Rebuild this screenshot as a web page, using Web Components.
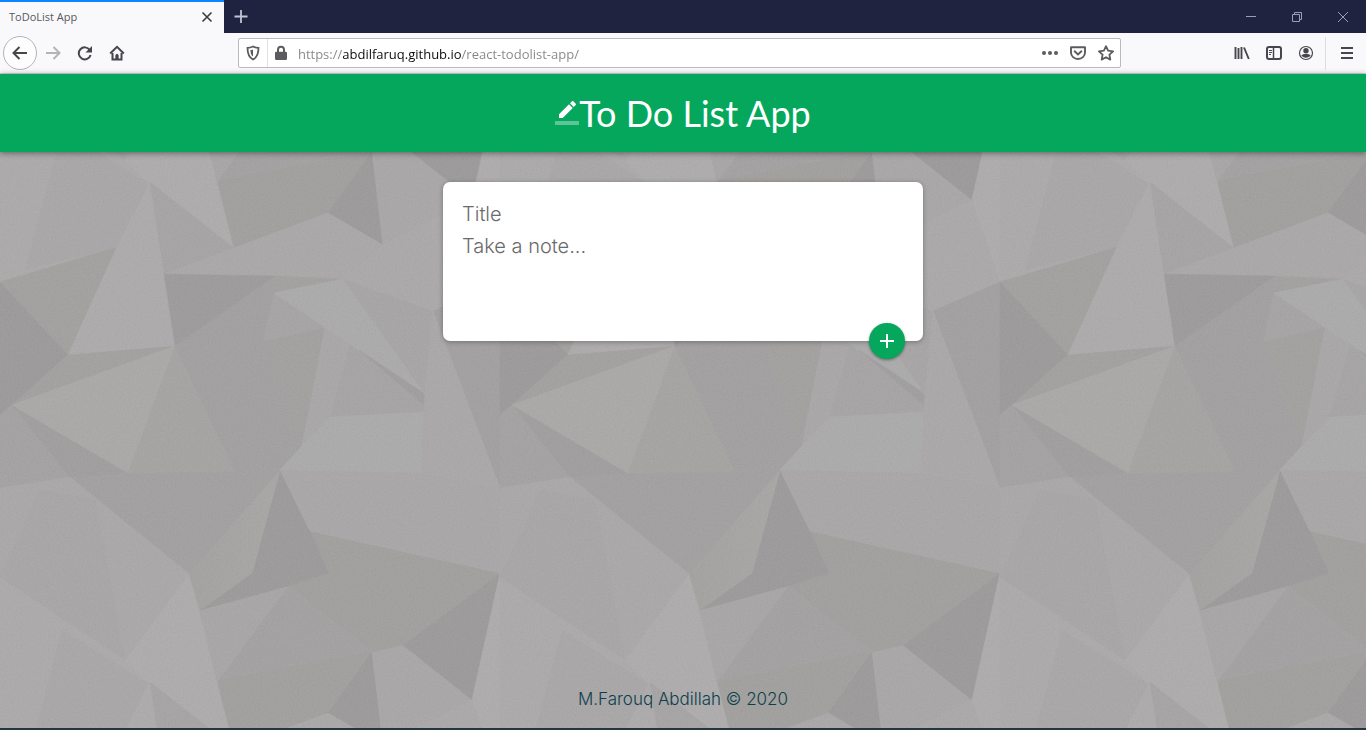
<!DOCTYPE html>
<html lang="en">
<head>
<meta charset="utf-8">
<title>ToDoList App</title>
<style>
  html, body { margin: 0; }
  body { min-height: 100vh; display: flex; flex-direction: column; font-family: "Open Sans", sans-serif; background: #263640; }
</style>
</head>
<body>
<browser-tabs>ToDoList App</browser-tabs>
<browser-toolbar></browser-toolbar>
<todo-app>
  <todo-header>To Do List App</todo-header>
  <note-form></note-form>
  <todo-footer>M.Farouq Abdillah © 2020</todo-footer>
</todo-app>

<script>
const define = (name, html) => customElements.define(name, class extends HTMLElement {
  constructor() {
    super();
    const t = document.createElement('template');
    t.innerHTML = html;
    this.attachShadow({ mode: 'open' }).append(t.content.cloneNode(true));
  }
});

const GLYPHS = {
  close: '<path d="M3.5 3.5l9 9m0-9l-9 9" stroke-width="1.6"/>',
  plus: '<path d="M8 1v13M1.5 7.500h13" stroke-width="1.8"/>',
  minimise: '<path d="M3 7.5h10" stroke-width="1"/>',
  restore: '<path d="M3.5 5.500h7v7h-7zM5.500 5.500v-2h7v7h-2" stroke-width="1"/>',
  shut: '<path d="M3 3l10 10M13 3L3 13" stroke-width="1"/>',
  back: '<path d="M15 8H1.800M7.500 2L1.500 8l6 6" stroke-width="2"/>',
  forward: '<path d="M1 8h13.200M8.500 2l6 6-6 6" stroke-width="2"/>',
  reload: '<path d="M12.800 5A6 6 0 1 0 13.600 10" stroke-width="2"/><path d="M15 1v6.500H8.500z" fill="currentColor" stroke="none"/>',
  home: '<path d="M1.200 8.500L8 1.800l6.800 6.700" stroke-width="2"/><path d="M3.500 8v6.500h9V8" stroke-width="2"/><path d="M6.800 14.500V10.500a1.200 1.200 0 0 1 2.400 0v4z" fill="currentColor" stroke-width=".8"/>',
  shield: '<path d="M8 1.500c2 1 3.800 1.300 5.500 1.300 0 5.700-1 9.500-5.500 11.700C3.500 12.300 2.500 8.500 2.500 2.800 4.200 2.800 6 2.500 8 1.500z" stroke-width="1.800"/><path d="M8 4.500c-1 .4-1.800.6-2.600.7.100 2.800.8 5 2.600 6.300z" fill="currentColor" stroke="none"/>',
  lock: '<path d="M5 7V4.800a3 3 0 0 1 6 0V7" stroke-width="2"/><rect x="2" y="6.800" width="12" height="8.200" rx="1.200" fill="currentColor" stroke="none"/>',
  dots: '<g fill="currentColor" stroke="none"><circle cx="2" cy="8" r="2"/><circle cx="8" cy="8" r="2"/><circle cx="14" cy="8" r="2"/></g>',
  pocket: '<path d="M1 2.200h14V7.500a7 6.500 0 0 1-14 0z" stroke-width="1.900" stroke-linejoin="round"/><path d="M4.600 6.300L8 9.500l3.400-3.200" stroke-width="1.900" stroke-linecap="round"/>',
  star: '<path d="M8 1.200l2.100 4.500 5 .6-3.700 3.400.9 4.900L8 12.200l-4.300 2.400.9-4.900L.900 6.300l5-.6z" stroke-width="1.800" stroke-linejoin="round"/>',
  library: '<path d="M1.500 2v12M4.500 3v11M7.500 2v12M10 2.500l4.800 11.500" stroke-width="1.900"/>',
  sidebar: '<rect x="1" y="2" width="14" height="12" rx="2" stroke-width="2"/><path d="M7.500 2v12" stroke-width="1.500"/><path d="M3 5.500h3M3 7.500h3M3 9.500h2" stroke-width="1"/>',
  account: '<circle cx="8" cy="8" r="6.500" stroke-width="1.200"/><circle cx="8" cy="5.800" r="2.700" fill="currentColor" stroke="none"/><path d="M3.300 10.300c2-1.700 7.400-1.700 9.400 0-1.800 3.300-7.600 3.300-9.400 0z" fill="currentColor" stroke="none"/>',
  menu: '<path d="M2 3h12M2 8h12M2 13h12" stroke-width="2"/>',
};

customElements.define('ui-icon', class extends HTMLElement {
  connectedCallback() {
    if (this.shadowRoot) return;
    this.attachShadow({ mode: 'open' }).innerHTML =
      `<style>:host{display:block;width:16px;height:16px;flex:none}svg{display:block}</style>
       <svg width="16" height="16" viewBox="0 0 16 16" fill="none" stroke="currentColor" aria-hidden="true">${GLYPHS[this.getAttribute('name')]}</svg>`;
  }
});

const BUTTON = `button{border:0;margin:0;padding:0;background:none;color:inherit;font:inherit;display:grid;place-items:center;flex:none}`;

define('browser-tabs', `
<style>
  ${BUTTON}
  :host { display: flex; height: 33px; background: #202340; color: #c4c4d6; flex: none; }
  .tab { box-sizing: border-box; width: 224px; border-top: 2px solid #0a84ff; background: #f9f9fb; color: #58585c;
         display: flex; align-items: center; justify-content: space-between; padding: 0 9px 2px; font-size: 11px; }
  .tab button { color: #3c3c40; }
  .new { width: 34px; }
  .window { display: flex; margin-left: auto; color: #9c9cb4; }
  .window button { width: 46px; }
</style>
<div class="tab"><slot></slot><button aria-label="Close tab"><ui-icon name="close"></ui-icon></button></div>
<button class="new" aria-label="New tab"><ui-icon name="plus"></ui-icon></button>
<div class="window">
  <button aria-label="Minimise"><ui-icon name="minimise"></ui-icon></button>
  <button aria-label="Restore"><ui-icon name="restore"></ui-icon></button>
  <button aria-label="Close"><ui-icon name="shut"></ui-icon></button>
</div>`);

define('browser-toolbar', `
<style>
  ${BUTTON}
  :host { display: flex; align-items: center; box-sizing: border-box; height: 41px; padding: 0 3px; background: #f9f9fb;
          border-bottom: 1px solid #d8d4da; color: #47474b; flex: none; }
  button { width: 32px; height: 32px; }
  .back { width: 34px; height: 34px; border: 1px solid #b4b4b8; border-radius: 50%; background: #fdfdfe; }
  .forward { color: #b4b4b7; }
  .gap { flex: 5 1 0; }
  .address { flex: 42 1 0; min-width: 0; box-sizing: border-box; height: 30px; display: flex; align-items: center;
             border: 1px solid #b9b9be; border-radius: 2px; background: #fff; color: #5c5c60; }
  .address button { width: 28px; height: 28px; }
  .lock { border-left: 1px solid #e2e2e4; }
  input { flex: 1; min-width: 0; border: 0; outline: 0; margin: 0; padding: 1px 0 0 3px; font: 13px "Open Sans", sans-serif; height: 24px;
          background: linear-gradient(90deg, #858589 48px, #0c0c0d 48px, #0c0c0d 166px, #858589 166px);
          -webkit-background-clip: text; background-clip: text; color: transparent; }
  .rule { width: 1px; height: 33px; background: #dedee2; margin: 0 5px 0 3px; }
</style>
<button class="back" aria-label="Back"><ui-icon name="back"></ui-icon></button>
<button class="forward" aria-label="Forward"><ui-icon name="forward"></ui-icon></button>
<button aria-label="Reload"><ui-icon name="reload"></ui-icon></button>
<button aria-label="Home"><ui-icon name="home"></ui-icon></button>
<div class="gap"></div>
<div class="address">
  <button aria-label="Tracking protection"><ui-icon name="shield"></ui-icon></button>
  <button class="lock" aria-label="Site information"><ui-icon name="lock"></ui-icon></button>
  <input aria-label="Address" value="https://abdilfaruq.github.io/react-todolist-app/" spellcheck="false">
  <button aria-label="Page actions"><ui-icon name="dots"></ui-icon></button>
  <button aria-label="Save to Pocket"><ui-icon name="pocket"></ui-icon></button>
  <button aria-label="Bookmark"><ui-icon name="star"></ui-icon></button>
</div>
<div class="gap"></div>
<button aria-label="Library"><ui-icon name="library"></ui-icon></button>
<button aria-label="Sidebars"><ui-icon name="sidebar"></ui-icon></button>
<button aria-label="Account"><ui-icon name="account"></ui-icon></button>
<div class="rule"></div>
<button aria-label="Menu"><ui-icon name="menu"></ui-icon></button>`);

/* Facets of the repeating 500 x 500 low-poly wallpaper: fill, then points. */
const FACETS = [
  ['#aba9aa', '0,577 125,660 149,684 164,774 117,747 0,782'],
  ['#a8a6a7', '62,630 149,684 164,774 117,747 25,770'],
  ['#a1a09e', '0,282 117,247 68,355'],
  ['#9b999a', '0,282 68,355 12,405 0,415'],
  ['#a19f9f', '433,311 500,282 500,415 512,405 500,488'],
  ['#acaaab', '117,247 150,182 164,274 175,346 68,355'],
  ['#a5a3a4', '150,182 234,248 275,276 164,274'],
  ['#a9a7a8', '234,248 328,213 383,245 343,279 275,276 164,274'],
  ['#adabac', '189,574 125,660 149,684 234,748'],
  ['#a09f9d', '217,680 372,650 328,713 234,748'],
  ['#9b999a', '372,651 328,713 383,745'],
  ['#a8a6a7', '372,651 403,645 472,700 383,745'],
  ['#9b999a', '403,645 500,573 472,700'],
  ['#adabac', '500,573 472,700 500,782 540,730 560,617'],
  ['#aaa8a9', '472,700 383,745 343,779 433,811 500,782'],
  ['#a09f9d', '310,531 500,573 403,645 372,652 288,586 329,573'],
  ['#a3a0a1', '288,586 372,651 217,680'],
  ['#a7a5a6', '200,610 288,586 217,682'],
  ['#9b999a', '280,470 310,531 329,573 288,586 200,610 252,573'],
  ['url(#olive)', '280,470 252,573 200,610 189,574'],
  ['#a29fa0', '128,473 280,470 189,574 70,477'],
  ['#a3a1a1', '12,405 128,473 70,477 0,488 0,415'],
  ['#9f9d9e', '12,405 128,473 70,477'],
  ['#a9a7a8', '0,488 70,477 189,574 125,660 0,577'],
  ['#a7a5a6', '40,490 95,500 125,660 0,577'],
  ['#a29f9f', '68,355 175,346 12,405'],
  ['#a9a8a7', '12,405 175,346 128,473'],
  ['#a4a3a1', '175,346 235,471 128,473'],
  ['#a19f9f', '175,346 275,276 274,293 325,328 302,446 280,470 235,471'],
  ['#9c9a9b', '164,274 275,276 175,346'],
  ['#a2a09f', '275,276 343,279 274,293'],
  ['#a5a3a4', '274,293 325,328 263,342'],
  ['#a29f9f', '325,328 302,446 263,342'],
  ['#a8a6a7', '325,328 322,320 425,390 425,412 330,418 302,446'],
  ['#a5a3a4', '350,345 425,398 425,412 330,418'],
  ['#abaaaa', '330,417 425,412 421,473 280,470 302,446'],
  ['#abaaaa', '274,293 343,279 425,394'],
  ['#a6a4a5', '343,279 433,311 425,394'],
  ['#9f9d9e', '359,350 425,394 425,406'],
  ['#a9a7a8', '433,311 500,488 421,473 425,390'],
  ['#a8a6a7', '280,470 421,473 500,488 500,573 310,531'],
];
const facets = FACETS.map(([f, p]) => `<polygon fill="${f}" stroke="${f}" stroke-width=".5" points="${p}"/>`).join('');
const copies = [-500, 0, 500].flatMap(x => [-1000, -500, 0].map(y => `<use href="#facets" x="${x}" y="${y}"/>`)).join('');

define('todo-app', `
<style>
  :host { display: flex; flex-direction: column; flex: 1; position: relative; isolation: isolate; background: #a7a5a6; margin-bottom: 2px; }
  .wallpaper { position: absolute; inset: 0; width: 100%; height: 100%; z-index: -1; }
</style>
<svg class="wallpaper" aria-hidden="true">
  <defs>
    <linearGradient id="olive" x1="0" y1="0" x2="1" y2="0"><stop offset="0" stop-color="#a3a1a0"/><stop offset="1" stop-color="#a8a6a5"/></linearGradient>
    <g id="facets">${facets}</g>
    <pattern id="tile" width="500" height="500" patternUnits="userSpaceOnUse" patternTransform="translate(0 -74)">
      <rect width="500" height="500" fill="#a9a7a8"/>${copies}
    </pattern>
    <filter id="grain" x="0" y="0" width="100%" height="100%">
      <feTurbulence type="fractalNoise" baseFrequency=".6" numOctaves="2" seed="4"/>
      <feColorMatrix values="1 0 0 0 0  1 0 0 0 0  1 0 0 0 0  0 0 0 0 .06"/>
    </filter>
  </defs>
  <rect width="100%" height="100%" fill="url(#tile)"/>
  <rect width="100%" height="100%" filter="url(#grain)"/>
</svg>
<slot></slot>`);

define('todo-header', `
<style>
  :host { display: flex; align-items: center; justify-content: center; height: 78px; background: #04a75c; color: #fff;
          box-shadow: 0 1px 6px rgba(0,0,0,.45); }
  h1 { margin: 0; font: 400 36px/48px Lato, sans-serif; }
  svg { display: block; }
</style>
<svg width="24" height="24" viewBox="0 0 24 24" fill="#fff" aria-hidden="true">
  <path opacity=".36" d="M0 20h24v4H0z"/>
  <path d="M17.750 7L14 3.250l-10 10V17h3.750l10-10zM20.710 4.040a1 1 0 0 0 0-1.410L18.370.290a1 1 0 0 0-1.410 0L15 2.250 18.750 6l1.960-1.960z"/>
</svg>
<h1><slot></slot></h1>`);

define('note-form', `
<style>
  :host { display: block; width: 480px; max-width: 100%; margin: 30px auto 0; }
  form { position: relative; box-sizing: border-box; display: flex; flex-direction: column; height: 159px; padding: 16px 19px;
         background: #fff; border-radius: 7px; box-shadow: 0 1px 5px rgba(0,0,0,.3); }
  input, textarea { display: block; box-sizing: border-box; width: 100%; border: 0; outline: 0; margin: 0; padding: 0; background: none;
         resize: none; font: 300 20px/32px Inter, sans-serif; color: #333; }
  input { height: 32px; }
  textarea { flex: 1; }
  ::placeholder { color: #6a6a6a; opacity: 1; }
  button { position: absolute; right: 18px; bottom: -18px; width: 36px; height: 36px; border: 0; border-radius: 50%; padding: 0;
           background: #04a75c; color: #fff; display: grid; place-items: center; box-shadow: 0 1px 3px rgba(0,0,0,.4); }
</style>
<form>
  <input name="title" aria-label="Title" placeholder="Title">
  <textarea name="content" aria-label="Note" placeholder="Take a note..."></textarea>
  <button type="button" aria-label="Add note"><svg width="24" height="24" viewBox="0 0 24 24" fill="currentColor"><path d="M19 13h-6v6h-2v-6H5v-2h6V5h2v6h6z"/></svg></button>
</form>`);

define('todo-footer', `
<style>
  :host { display: block; margin-top: auto; padding-bottom: 17px; text-align: center; font: 300 17px/24px Inter, sans-serif; color: #0c404c; }
  p { margin: 0; }
</style>
<p><slot></slot></p>`);
</script>
</body>
</html>
